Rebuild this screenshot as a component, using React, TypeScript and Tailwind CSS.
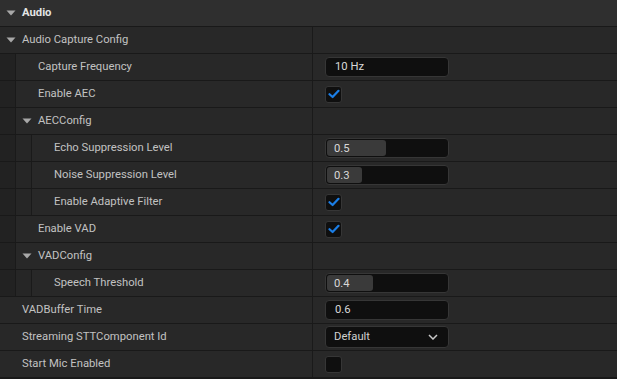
import React from "react";

type Row =
  | { kind: "group"; label: string; depth: number }
  | { kind: "text"; label: string; depth: number; value: string }
  | { kind: "check"; label: string; depth: number; checked: boolean }
  | { kind: "slider"; label: string; depth: number; value: string; frac: number }
  | { kind: "select"; label: string; depth: number; value: string };

const rows: Row[] = [
  { kind: "group", label: "Audio Capture Config", depth: 0 },
  { kind: "text", label: "Capture Frequency", depth: 1, value: "10 Hz" },
  { kind: "check", label: "Enable AEC", depth: 1, checked: true },
  { kind: "group", label: "AECConfig", depth: 1 },
  { kind: "slider", label: "Echo Suppression Level", depth: 2, value: "0.5", frac: 0.49 },
  { kind: "slider", label: "Noise Suppression Level", depth: 2, value: "0.3", frac: 0.29 },
  { kind: "check", label: "Enable Adaptive Filter", depth: 2, checked: true },
  { kind: "check", label: "Enable VAD", depth: 1, checked: true },
  { kind: "group", label: "VADConfig", depth: 1 },
  { kind: "slider", label: "Speech Threshold", depth: 2, value: "0.4", frac: 0.38 },
  { kind: "text", label: "VADBuffer Time", depth: 0, value: "0.6" },
  { kind: "select", label: "Streaming STTComponent Id", depth: 0, value: "Default" },
  { kind: "check", label: "Start Mic Enabled", depth: 0, checked: false },
];

function Arrow() {
  return (
    <svg width="10" height="6" viewBox="0 0 10 6" className="shrink-0">
      <path d="M0.5 0.5 L9.5 0.5 L5 5.5 Z" fill="#a8a8a8" />
    </svg>
  );
}

function Check() {
  return (
    <svg width="12" height="10" viewBox="0 0 12 10">
      <path d="M1.5 5.2 L4.6 8 L10.5 1.8" stroke="#1b7ee6" strokeWidth="2.2" fill="none" strokeLinecap="round" strokeLinejoin="round" />
    </svg>
  );
}

function Value({ row }: { row: Row }) {
  if (row.kind === "text") {
    return (
      <div className="flex h-[20px] w-[124px] items-center rounded-[4px] border border-[#363636] bg-[#0f0f0f] pl-[9px] text-[#d8d8d8]">
        {row.value}
      </div>
    );
  }
  if (row.kind === "check") {
    return (
      <div className="flex h-[17px] w-[17px] items-center justify-center rounded-[3px] border border-[#363636] bg-[#0f0f0f]">
        {row.checked && <Check />}
      </div>
    );
  }
  if (row.kind === "slider") {
    return (
      <div className="relative flex h-[20px] w-[124px] items-center rounded-[4px] border border-[#363636] bg-[#0f0f0f] p-px">
        <div className="h-full rounded-[3px] bg-[#3a3a3a]" style={{ width: `${row.frac * 100}%` }} />
        <span className="absolute left-[8px] top-[2px] text-[#d8d8d8]">{row.value}</span>
      </div>
    );
  }
  if (row.kind === "select") {
    return (
      <div className="flex h-[22px] w-[124px] items-center justify-between rounded-[4px] border border-[#363636] bg-[#0f0f0f] pl-[8px] pr-[10px] text-[#d0d0d0]">
        <span>{row.value}</span>
        <svg width="10" height="6" viewBox="0 0 10 6">
          <path d="M1 1 L5 5 L9 1" stroke="#c8c8c8" strokeWidth="1.5" fill="none" />
        </svg>
      </div>
    );
  }
  return null;
}

function Gutters({ depth }: { depth: number }) {
  const g = [];
  for (let i = 0; i < depth; i++) {
    g.push(
      <div
        key={i}
        className={`h-full w-[16px] shrink-0 border-r border-[#1a1a1a] ${i === 0 ? "bg-[#222222]" : "bg-[#262626]"}`}
      />
    );
  }
  return <>{g}</>;
}

export default function App() {
  return (
    <div
      className="flex h-[379px] w-[617px] flex-col gap-px overflow-hidden bg-[#191919] text-[11.25px] text-[#c2c2c2]"
      style={{ fontFamily: "Roboto, 'Noto Sans', sans-serif" }}
    >
      <div className="flex h-[26px] shrink-0 items-center bg-[#2f2f2f]">
        <div className="flex w-[22px] justify-center">
          <Arrow />
        </div>
        <span className="font-bold text-[#e4e4e4]">Audio</span>
      </div>
      {rows.map((row, i) => (
        <div key={i} className="flex h-[26px] shrink-0 bg-[#282828]">
          <div className="flex w-[312px] shrink-0">
            <Gutters depth={row.depth} />
            <div className="flex flex-1 items-center">
              <div className="flex w-[22px] shrink-0 justify-center">
                {row.kind === "group" && <Arrow />}
              </div>
              <span>{row.label}</span>
            </div>
          </div>
          <div className="w-px shrink-0 bg-[#1a1a1a]" />
          <div className="flex flex-1 items-center pl-[12px]">
            <Value row={row} />
          </div>
        </div>
      ))}
    </div>
  );
}
